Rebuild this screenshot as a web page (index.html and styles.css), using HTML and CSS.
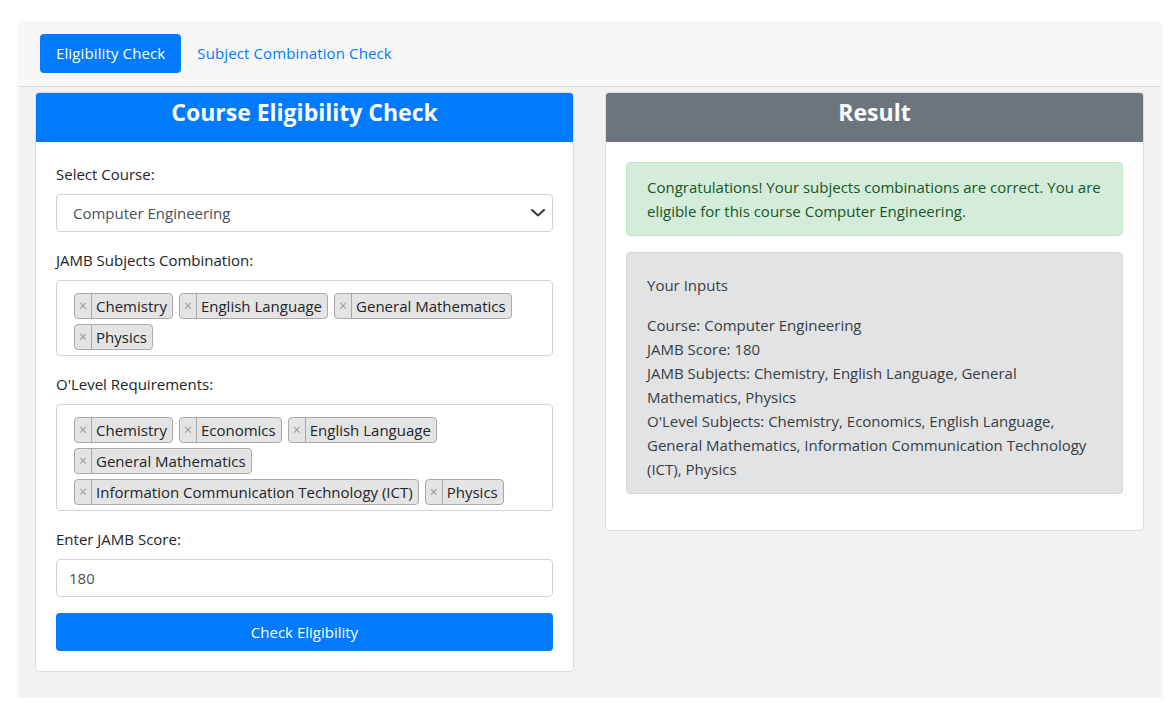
FILE: index.html
```html
<!DOCTYPE html>
<html lang="en">
<head>
<meta charset="utf-8">
<title>Course Eligibility Check</title>
<link rel="stylesheet" href="styles.css">
</head>
<body>
<div class="app">
  <nav class="tabs">
    <a class="tab active" href="#">Eligibility Check</a>
    <a class="tab" href="#">Subject Combination Check</a>
  </nav>
  <div class="columns">
    <section class="card">
      <h3 class="card-header primary">Course Eligibility Check</h3>
      <div class="card-body">
        <div class="field">
          <label class="label">Select Course:</label>
          <div class="select">
            <span class="select-text">Computer Engineering</span>
            <svg class="chevron" width="14" height="8" viewBox="0 0 14 8"><path d="M1 1l6 5.5 6-5.5" fill="none" stroke="#343a40" stroke-width="2" stroke-linecap="round" stroke-linejoin="round"/></svg>
          </div>
        </div>
        <div class="field">
          <label class="label">JAMB Subjects Combination:</label>
          <div class="tagbox">
            <span class="tag"><span class="x">×</span><span class="t">Chemistry</span></span>
            <span class="tag"><span class="x">×</span><span class="t">English Language</span></span>
            <span class="tag"><span class="x">×</span><span class="t">General Mathematics</span></span>
            <span class="tag"><span class="x">×</span><span class="t">Physics</span></span>
          </div>
        </div>
        <div class="field">
          <label class="label">O'Level Requirements:</label>
          <div class="tagbox">
            <span class="tag"><span class="x">×</span><span class="t">Chemistry</span></span>
            <span class="tag"><span class="x">×</span><span class="t">Economics</span></span>
            <span class="tag"><span class="x">×</span><span class="t">English Language</span></span>
            <span class="tag"><span class="x">×</span><span class="t">General Mathematics</span></span>
            <span class="tag"><span class="x">×</span><span class="t">Information Communication Technology (ICT)</span></span>
            <span class="tag"><span class="x">×</span><span class="t">Physics</span></span>
          </div>
        </div>
        <div class="field">
          <label class="label">Enter JAMB Score:</label>
          <div class="input">180</div>
        </div>
        <button class="btn">Check Eligibility</button>
      </div>
    </section>
    <section class="card">
      <h3 class="card-header secondary">Result</h3>
      <div class="card-body">
        <div class="alert-success">Congratulations! Your subjects combinations are correct. You are<br>eligible for this course Computer Engineering.</div>
        <div class="alert-secondary">
          <p class="inputs-title">Your Inputs</p>
          <p class="inputs-lines">Course: Computer Engineering<br>JAMB Score: 180<br>JAMB Subjects: Chemistry, English Language, General<br>Mathematics, Physics<br>O'Level Subjects: Chemistry, Economics, English Language,<br>General Mathematics, Information Communication Technology<br>(ICT), Physics</p>
        </div>
      </div>
    </section>
  </div>
</div>
</body>
</html>
```

FILE: styles.css
```css
* { box-sizing: border-box; }
body {
  margin: 0;
  background: #fff;
  font-family: "Open Sans", "Noto Sans", Arial, sans-serif;
  font-size: 15px;
  line-height: 24px;
  color: #212529;
}
.app {
  margin: 22px 0 0 19px;
  width: 1142px;
  background: #f2f2f2;
  box-shadow: 0 1px 4px rgba(0,0,0,0.08);
}
.tabs {
  display: flex;
  align-items: center;
  background: #f7f7f7;
  border-bottom: 1px solid #dcdcdc;
  padding: 12px 21px 13px;
}
.tab {
  display: block;
  padding: 7px 16px;
  line-height: 25px;
  color: #007bff;
  text-decoration: none;
  border-radius: 4px;
  letter-spacing: 0.12px;
}
.tab.active { background: #007bff; color: #fff; }
.columns {
  display: grid;
  grid-template-columns: 539px 539px;
  column-gap: 31px;
  align-items: start;
  padding: 5px 16px 26px 16px;
}
.card {
  background: #fff;
  border: 1px solid #dcdcdc;
  border-radius: 4px;
  overflow: hidden;
}
.card-header {
  margin: -1px -1px 0;
  height: 50px;
  line-height: 40px;
  padding-bottom: 10px;
  text-align: center;
  color: #fff;
  font-size: 23px;
  font-weight: 700;
  border-radius: 4px 4px 0 0;
}
.card-header.primary { background: #007bff; }
.card-header.secondary { background: #6c757d; }
.card-body { padding: 20px 20px 20px; }
.field { margin-bottom: 16px; }
.label { display: block; margin-bottom: 8px; }
.select, .input {
  display: flex;
  align-items: center;
  height: 38px;
  border: 1px solid #ced4da;
  border-radius: 4px;
  color: #495057;
  background: #fff;
}
.select { padding: 0 7px 0 16px; justify-content: space-between; }
.input { padding: 0 12px; }
.chevron { display: block; }
.tagbox {
  display: flex;
  flex-wrap: wrap;
  column-gap: 6px;
  row-gap: 5px;
  border: 1px solid #ced4da;
  border-radius: 4px;
  padding: 12px 12px 5px 17px;
}
.tag {
  display: flex;
  height: 26px;
  line-height: 24px;
  background: #e4e4e4;
  border: 1px solid #aaa;
  border-radius: 4px;
  color: #212529;
  white-space: nowrap;
}
.tag .x {
  padding: 0 4px;
  color: #999;
  font-size: 14px;
  border-right: 1px solid #aaa;
}
.tag .t { padding: 0 5px 0 4px; }
.btn {
  display: block;
  width: 100%;
  height: 38px;
  border: 0;
  border-radius: 4px;
  background: #007bff;
  color: #fff;
  font: inherit;
}
.alert-success {
  background: #d4edda;
  border: 1px solid #c3e6cb;
  color: #155724;
  border-radius: 4px;
  padding: 12px 20px;
  margin-bottom: 16px;
  white-space: nowrap;
}
.alert-secondary {
  background: #e2e3e5;
  border: 1px solid #d6d8db;
  color: #383d41;
  border-radius: 4px;
  padding: 20px 20px 12px;
  margin-bottom: 16px;
  white-space: nowrap;
}
.inputs-title { margin: 0 0 16px; }
.inputs-lines { margin: 0; }
```
